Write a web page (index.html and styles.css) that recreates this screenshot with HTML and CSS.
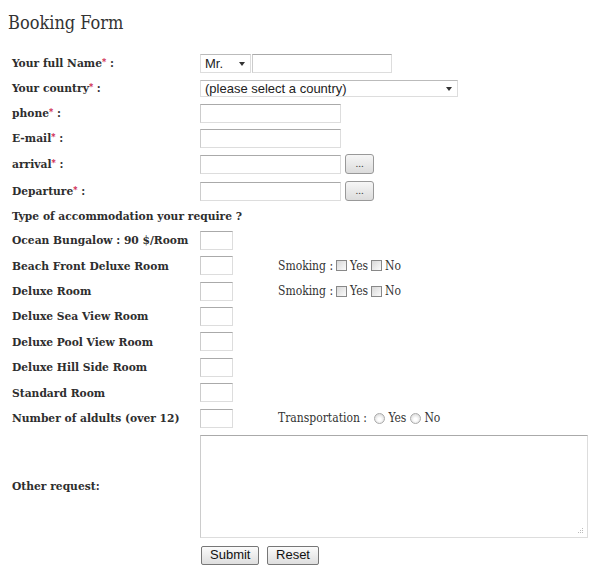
FILE: index.html
```html
<!DOCTYPE html>
<html>
<head>
<meta charset="utf-8">
<link rel="stylesheet" href="styles.css">
</head>
<body>
<h1 class="title">Booking Form</h1>
<form class="form">
  <div class="row">
    <label class="lbl">Your full Name<span class="req">*</span> :</label>
    <div class="field">
      <span class="sel-wrap sel-title"><select class="sel"><option>Mr.</option></select><span class="arrow"></span></span><input class="txt txt-name" type="text">
    </div>
  </div>
  <div class="row">
    <label class="lbl">Your country<span class="req">*</span> :</label>
    <div class="field">
      <span class="sel-wrap sel-country"><select class="sel"><option>(please select a country)</option></select><span class="arrow"></span></span>
    </div>
  </div>
  <div class="row">
    <label class="lbl">phone<span class="req">*</span> :</label>
    <div class="field"><input class="txt" type="text"></div>
  </div>
  <div class="row">
    <label class="lbl">E-mail<span class="req">*</span> :</label>
    <div class="field"><input class="txt" type="text"></div>
  </div>
  <div class="row row-27">
    <label class="lbl">arrival<span class="req">*</span> :</label>
    <div class="field"><input class="txt" type="text"><button type="button" class="dots">...</button></div>
  </div>
  <div class="row row-27">
    <label class="lbl">Departure<span class="req">*</span> :</label>
    <div class="field"><input class="txt" type="text"><button type="button" class="dots">...</button></div>
  </div>
  <div class="row row-23">
    <label class="lbl lbl-wide">Type of accommodation your require ?</label>
  </div>
  <div class="row">
    <label class="lbl">Ocean Bungalow : 90 $/Room</label>
    <div class="field"><input class="box" type="text"></div>
  </div>
  <div class="row row-26">
    <label class="lbl">Beach Front Deluxe Room</label>
    <div class="field"><input class="box" type="text">
      <span class="opt">Smoking :<input type="checkbox" class="chk">Yes<input type="checkbox" class="chk">No</span>
    </div>
  </div>
  <div class="row">
    <label class="lbl">Deluxe Room</label>
    <div class="field"><input class="box" type="text">
      <span class="opt">Smoking :<input type="checkbox" class="chk">Yes<input type="checkbox" class="chk">No</span>
    </div>
  </div>
  <div class="row">
    <label class="lbl">Deluxe Sea View Room</label>
    <div class="field"><input class="box" type="text"></div>
  </div>
  <div class="row row-26">
    <label class="lbl">Deluxe Pool View Room</label>
    <div class="field"><input class="box" type="text"></div>
  </div>
  <div class="row">
    <label class="lbl">Deluxe Hill Side Room</label>
    <div class="field"><input class="box" type="text"></div>
  </div>
  <div class="row row-26">
    <label class="lbl">Standard Room</label>
    <div class="field"><input class="box" type="text"></div>
  </div>
  <div class="row">
    <label class="lbl">Number of aldults (over 12)</label>
    <div class="field"><input class="box" type="text">
      <span class="opt">Transportation : <input type="radio" name="tr" class="rad">Yes<input type="radio" name="tr" class="rad">No</span>
    </div>
  </div>
  <div class="row row-area">
    <label class="lbl">Other request:</label>
    <div class="field area-wrap"><textarea class="area"></textarea>
      <svg class="grip" width="7" height="7" viewBox="0 0 7 7"><rect x="5" y="1" width="1" height="1" fill="#bbb"/><rect x="3" y="3" width="1" height="1" fill="#bbb"/><rect x="5" y="3" width="1" height="1" fill="#bbb"/><rect x="1" y="5" width="1" height="1" fill="#bbb"/><rect x="3" y="5" width="1" height="1" fill="#bbb"/><rect x="5" y="5" width="1" height="1" fill="#bbb"/></svg>
    </div>
  </div>
  <div class="actions">
    <button type="submit" class="btn btn-submit">Submit</button>
    <button type="reset" class="btn btn-reset">Reset</button>
  </div>
</form>
</body>
</html>
```
FILE: styles.css
```css
html, body {
  margin: 0;
  padding: 0;
  background: #ffffff;
}
body {
  padding: 0 8px;
  font-family: "DejaVu Serif Condensed", "DejaVu Serif", "Liberation Serif", serif;
  font-stretch: condensed;
  color: #333333;
}
.title {
  margin: 0;
  padding-top: 12px;
  height: 50.5px;
  box-sizing: border-box;
  font-size: 18px;
  font-weight: normal;
  line-height: 22px;
  color: #333333;
}
.form {
  padding-left: 4px;
}
.row {
  display: flex;
  align-items: center;
  height: 25px;
}
.row-27 { height: 27px; }
.row-26 { height: 26px; }
.row-23 { height: 23px; }
.lbl {
  width: 188px;
  flex: none;
  font-size: 11.9px;
  font-weight: bold;
  color: #2e2e2e;
  white-space: nowrap;
}
.lbl-wide { width: auto; }
.req { color: #cc1144; font-size: 9px; vertical-align: 2px; }
.field {
  display: flex;
  align-items: center;
}
.txt, .box, .area {
  box-sizing: border-box;
  border: 1px solid #dddddd;
  border-top-color: #aaaaaa;
  border-left-color: #cccccc;
  background: #ffffff;
  margin: 0;
  padding: 0 2px;
  font-family: "Liberation Sans", Arial, sans-serif;
  font-size: 13px;
}
.txt { width: 141px; height: 19px; }
.txt-name { width: 140px; height: 19px; margin-left: 1px; }
.box { width: 33px; height: 19px; }
.sel-wrap {
  position: relative;
  display: inline-block;
}
.sel {
  -webkit-appearance: none;
  appearance: none;
  box-sizing: border-box;
  margin: 0;
  border: 1px solid #dddddd;
  border-top-color: #bbbbbb;
  background: #ffffff;
  font-family: "Liberation Sans", Arial, sans-serif;
  font-size: 13px;
  color: #222222;
  padding: 0 0 0 4px;
  border-radius: 0;
  display: block;
}
.sel-title .sel { width: 51px; height: 19px; }
.sel-country .sel { width: 258px; height: 17px; line-height: 15px; }
.arrow {
  position: absolute;
  top: 50%;
  right: 6px;
  margin-top: -1px;
  width: 0;
  height: 0;
  border-left: 3.5px solid transparent;
  border-right: 3.5px solid transparent;
  border-top: 4px solid #333333;
  pointer-events: none;
}
.dots {
  box-sizing: border-box;
  margin-left: 4px;
  width: 29px;
  height: 20px;
  padding: 0 0 3px;
  border: 1px solid #999999;
  border-radius: 3px;
  background: linear-gradient(#f6f6f6, #dcdcdc);
  font-family: "Liberation Serif", serif;
  font-size: 11px;
  color: #444444;
  line-height: 12px;
}
.opt {
  margin-left: 45px;
  font-size: 12px;
  color: #333333;
  display: inline-flex;
  align-items: center;
  white-space: pre;
}
.chk {
  -webkit-appearance: none;
  appearance: none;
  margin: 0 3px 0 3px;
  width: 11px;
  height: 11px;
  border: 1px solid #888888;
  background: linear-gradient(135deg, #d8d8d8, #fbfbfb);
  box-sizing: border-box;
}
.rad {
  -webkit-appearance: none;
  appearance: none;
  margin: 0 3px 0 4px;
  width: 11px;
  height: 11px;
  border: 1px solid #aaaaaa;
  border-radius: 50%;
  background: radial-gradient(circle at 50% 60%, #ffffff 20%, #d6d6d6 90%);
  box-sizing: border-box;
}
.row-area {
  height: 107px;
  padding-top: 4.5px;
  align-items: center;
  box-sizing: border-box;
}
.area-wrap {
  position: relative;
}
.area {
  width: 388px;
  height: 103px;
  resize: none;
  display: block;
}
.grip {
  position: absolute;
  right: 4px;
  bottom: 4px;
}
.actions {
  display: flex;
  gap: 8px;
  padding-left: 189px;
  padding-top: 8px;
}
.btn {
  box-sizing: border-box;
  height: 19px;
  margin: 0;
  padding: 0 8px;
  border: 1px solid #777777;
  border-radius: 2px;
  background: linear-gradient(#fbfbfb, #dedede);
  font-family: "Liberation Sans", Arial, sans-serif;
  font-size: 13px;
  color: #111111;
  line-height: 16px;
}
.btn-submit { width: 58px; }
.btn-reset { width: 52px; }
```
